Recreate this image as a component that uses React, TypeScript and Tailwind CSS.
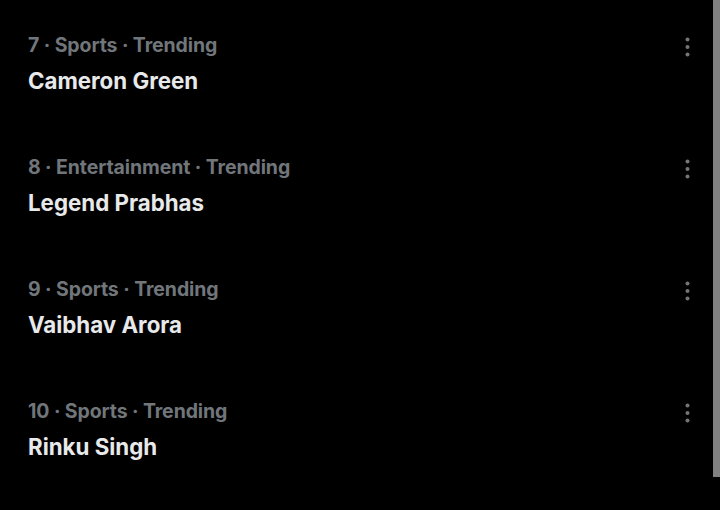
const trends = [
  {rank: 7, category: "Sports", name: "Cameron Green"},
  {rank: 8, category: "Entertainment", name: "Legend Prabhas"},
  {rank: 9, category: "Sports", name: "Vaibhav Arora"},
  {rank: 10, category: "Sports", name: "Rinku Singh"}
]

function MoreDots() {
  return (
    <svg width="5" height="20" viewBox="0 0 5 20" className="mt-[4px] mr-[23px] shrink-0">
      <circle cx="2.5" cy="2.5" r="2" fill="#71767b"/>
      <circle cx="2.5" cy="10" r="2" fill="#71767b"/>
      <circle cx="2.5" cy="17.5" r="2" fill="#71767b"/>
    </svg>
  )
}

export default function App() {
  return (
    <div
      className="flex w-[720px] h-[510px] bg-black overflow-hidden"
      style={{fontFamily: "Inter, 'Liberation Sans', sans-serif"}}
    >
      <div className="flex-1 flex flex-col">
        {trends.map((t) => (
          <div key={t.rank} className="flex justify-between items-start h-[122px] pl-[28px] pt-[33px]">
            <div className="flex flex-col">
              <span className="text-[19.5px] leading-[24px] font-bold text-[#71767b] tracking-[-0.1px]">
                {t.rank} · {t.category} · Trending
              </span>
              <span className="mt-[10px] text-[22.3px] leading-[28px] font-bold text-[#e7e9ea]">
                {t.name}
              </span>
            </div>
            <MoreDots/>
          </div>
        ))}
      </div>
      <div className="w-[7px] flex flex-col">
        <div className="h-[477px] bg-[#808080]"/>
      </div>
    </div>
  )
}
